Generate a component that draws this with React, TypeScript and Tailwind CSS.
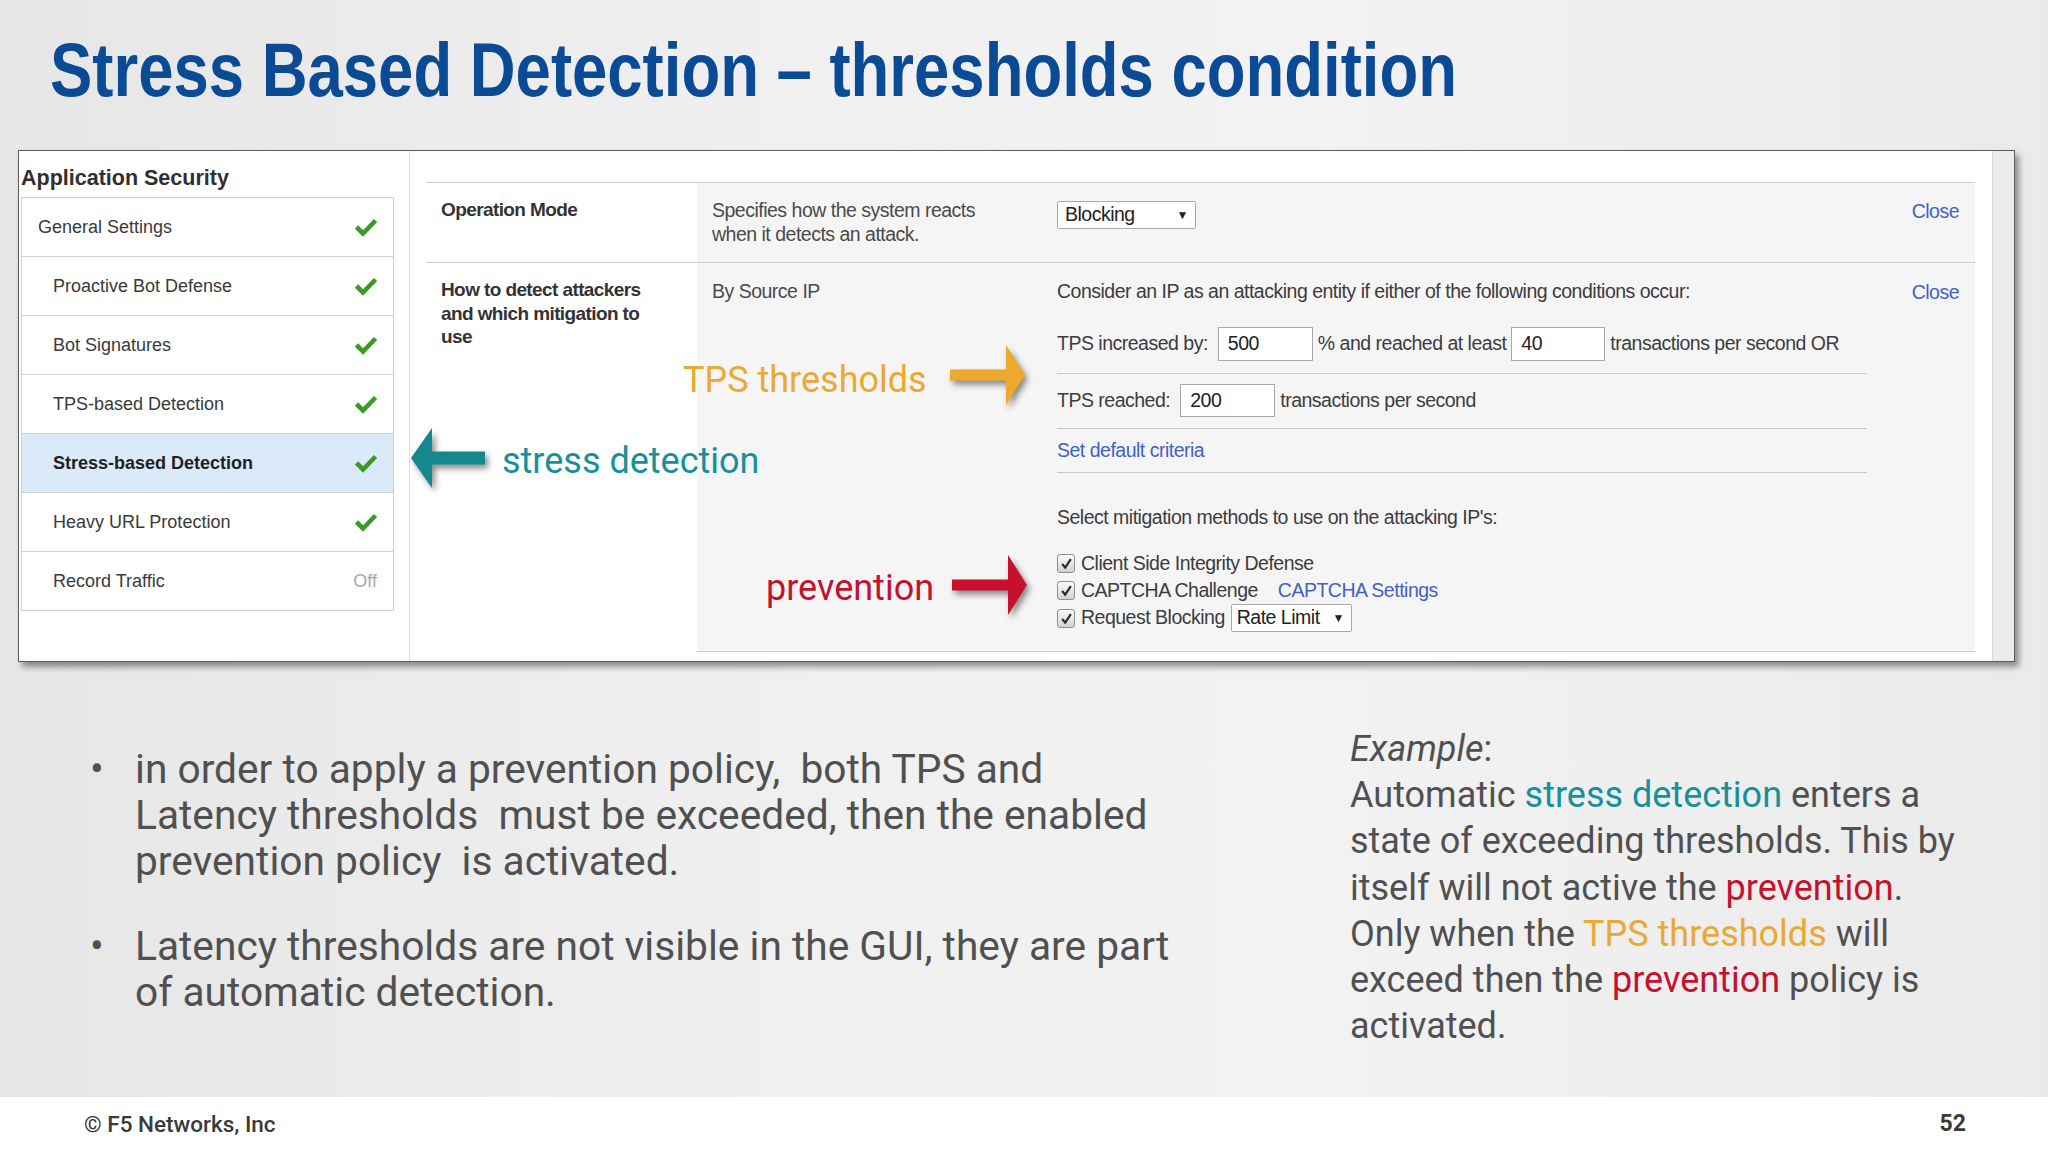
import React from "react";

const Check = () => (
  <svg width="24" height="20" viewBox="0 0 24 20" className="shrink-0">
    <path d="M2.5 10 L9 16.5 L21.5 3.5" fill="none" stroke="#3b9a23" strokeWidth="4.6" strokeLinejoin="miter" />
  </svg>
);

const Box = () => (
  <span className="w-[18px] h-[19px] rounded-[3px] border border-[#8e8e8e] bg-[linear-gradient(#fbfbfb,#d2d2d2)] flex items-center justify-center shrink-0">
    <svg width="13" height="13" viewBox="0 0 12 12">
      <path d="M2 6.5 L4.8 9.8 L10 2" fill="none" stroke="#2b2b2b" strokeWidth="2" />
    </svg>
  </span>
);

const ArrowRight = ({ color }: { color: string }) => (
  <svg width="76" height="62" viewBox="0 0 76 62" className="drop-shadow-[3px_4px_3px_rgba(0,0,0,0.45)]">
    <rect x="0" y="25.5" width="57" height="11" fill={color} />
    <polygon points="56,1 75,31 56,61" fill={color} />
  </svg>
);

const ArrowLeft = ({ color }: { color: string }) => (
  <svg width="76" height="62" viewBox="0 0 76 62" className="drop-shadow-[3px_4px_3px_rgba(0,0,0,0.45)]">
    <rect x="21" y="24.5" width="54" height="13" fill={color} />
    <polygon points="22,1 1,31 22,61" fill={color} />
  </svg>
);

const Input = ({ v, w, h }: { v: string; w: string; h: string }) => (
  <div className={`${w} ${h} bg-white border border-[#a8a8a8] flex items-center pl-[9px] text-[#222] shrink-0`}>{v}</div>
);

const sideItems = [
  { t: "General Settings", indent: false },
  { t: "Proactive Bot Defense", indent: true },
  { t: "Bot Signatures", indent: true },
  { t: "TPS-based Detection", indent: true },
  { t: "Stress-based Detection", indent: true, active: true },
  { t: "Heavy URL Protection", indent: true },
  { t: "Record Traffic", indent: true, off: true },
];

export default function App() {
  return (
    <div className="w-[2048px] h-[1152px] flex flex-col overflow-hidden bg-[linear-gradient(90deg,#e6e6e7_0%,#f0f0f1_40%,#f2f2f3_65%,#eaeaeb_100%)]">
      {/* Title */}
      <div className="h-[150px] pt-[32px] pl-[50px] shrink-0">
        <h1 className="inline-block origin-left scale-x-[0.835] font-['Liberation_Sans',Arial,sans-serif] font-bold text-[76px] leading-none text-[#0b4a94] whitespace-nowrap">
          Stress Based Detection – thresholds condition
        </h1>
      </div>

      {/* Screenshot panel */}
      <div className="relative ml-[18px] w-[1997px] h-[512px] shrink-0 border border-[#5c5c5c] bg-white shadow-[4px_5px_6px_rgba(0,0,0,0.4)] flex">
        {/* Sidebar */}
        <div className="w-[391px] h-full border-r border-[#dedede] flex flex-col font-['Liberation_Sans',Arial,sans-serif] shrink-0">
          <div className="pl-[2px] pt-[15px] h-[46px] text-[21.5px] leading-[25px] font-bold text-[#2f2f2f] whitespace-nowrap">
            Application Security
          </div>
          <div className="ml-[2px] w-[373px] border border-[#cfcfcf] flex flex-col">
            {sideItems.map((it, i) => (
              <div
                key={it.t}
                className={`${i > 0 ? "h-[59px] border-t border-[#d3d3d3]" : "h-[58px]"} flex items-center justify-between pr-[15px] ${it.indent ? "pl-[31px]" : "pl-[16px]"} ${it.active ? "bg-[#dbeaf8] font-bold text-[#1f1f1f]" : "text-[#3a3a3a]"} text-[18px]`}
              >
                <span className="whitespace-nowrap">{it.t}</span>
                {it.off ? <span className="text-[#a8a8a8] pr-[1px]">Off</span> : <Check />}
              </div>
            ))}
          </div>
        </div>

        {/* Main area */}
        <div className="w-[1582px] h-full pl-[16px] pr-[17px] pt-[31px] font-['Liberation_Sans',Arial,sans-serif] text-[19.5px] tracking-[-0.5px] text-[#3c3c3c] shrink-0">
          <div className="border-t border-[#cdcdcd]">
            {/* Row 1 */}
            <div className="h-[80px] flex border-b border-[#cdcdcd]">
              <div className="w-[271px] pl-[15px] pt-[15px] font-bold text-[19px] tracking-[-0.6px] leading-[24px] text-[#333]">Operation Mode</div>
              <div className="flex-1 bg-[#f6f5f5] flex">
                <div className="w-[360px] pl-[15px] pt-[15px] leading-[24px] text-[#4a4a4a]">
                  Specifies how the system reacts
                  <br />
                  when it detects an attack.
                </div>
                <div className="flex-1 pt-[18px]">
                  <div className="w-[139px] h-[28px] border border-[#a9a9a9] rounded-[2px] bg-white flex items-center justify-between pl-[7px] pr-[7px] text-[#222]">
                    <span>Blocking</span>
                    <span className="text-[12px]">▼</span>
                  </div>
                </div>
                <div className="pr-[16px] pt-[16px] leading-[24px] text-[#3f62c4]">Close</div>
              </div>
            </div>
            {/* Row 2 */}
            <div className="h-[389px] flex">
              <div className="w-[271px] pl-[15px] pt-[15px] font-bold text-[19px] tracking-[-0.6px] leading-[23.5px] text-[#333]">
                How to detect attackers
                <br />
                and which mitigation to
                <br />
                use
              </div>
              <div className="flex-1 bg-[#f6f5f5] border-b border-[#cdcdcd] flex">
                <div className="w-[360px] pl-[15px] pt-[16px] leading-[24px] text-[#4a4a4a]">By Source IP</div>
                <div className="flex-1 pt-[16px] flex flex-col">
                  <div className="h-[24px] leading-[24px] whitespace-nowrap">
                    Consider an IP as an attacking entity if either of the following conditions occur:
                  </div>
                  <div className="mt-[24px] h-[34px] flex items-center whitespace-nowrap">
                    <span className="mr-[10px]">TPS increased by:</span>
                    <Input v="500" w="w-[95px]" h="h-[34px]" />
                    <span className="mx-[5px]">% and reached at least</span>
                    <Input v="40" w="w-[94px]" h="h-[34px]" />
                    <span className="ml-[5px]">transactions per second OR</span>
                  </div>
                  <div className="mt-[12px] w-[810px] border-t border-[#c9c9c9]" />
                  <div className="mt-[10px] h-[33px] flex items-center whitespace-nowrap">
                    <span className="mr-[10px]">TPS reached:</span>
                    <Input v="200" w="w-[95px]" h="h-[33px]" />
                    <span className="ml-[5px]">transactions per second</span>
                  </div>
                  <div className="mt-[11px] w-[810px] border-t border-[#c9c9c9]" />
                  <div className="mt-[9px] h-[24px] leading-[24px] text-[#3f62c4]">Set default criteria</div>
                  <div className="mt-[10px] w-[810px] border-t border-[#c9c9c9]" />
                  <div className="mt-[32px] h-[24px] leading-[24px] whitespace-nowrap">
                    Select mitigation methods to use on the attacking IP's:
                  </div>
                  <div className="mt-[21px] h-[27px] flex items-center gap-[6px] whitespace-nowrap">
                    <Box />
                    <span>Client Side Integrity Defense</span>
                  </div>
                  <div className="h-[27px] flex items-center gap-[6px] whitespace-nowrap">
                    <Box />
                    <span>CAPTCHA Challenge</span>
                    <span className="ml-[14px] text-[#3f62c4]">CAPTCHA Settings</span>
                  </div>
                  <div className="h-[28px] flex items-center gap-[6px] whitespace-nowrap">
                    <Box />
                    <span>Request Blocking</span>
                    <div className="w-[121px] h-[28px] border border-[#a9a9a9] rounded-[2px] bg-white flex items-center justify-between pl-[5px] pr-[7px] text-[#222]">
                      <span>Rate Limit</span>
                      <span className="text-[12px]">▼</span>
                    </div>
                  </div>
                </div>
                <div className="pr-[16px] pt-[17px] leading-[24px] text-[#3f62c4]">Close</div>
              </div>
            </div>
          </div>
        </div>

        {/* Scrollbar */}
        <div className="w-[22px] h-full bg-[#ececec] border-l border-[#d8d8d8] shrink-0" />

        {/* Annotations (overlay) */}
        <div className="absolute left-[664px] top-[211px] font-['Roboto',sans-serif] text-[36px] leading-[36px] text-[#eaa934] whitespace-nowrap">
          TPS thresholds
        </div>
        <div className="absolute left-[931px] top-[193px]">
          <ArrowRight color="#eca92e" />
        </div>
        <div className="absolute left-[391px] top-[276px]">
          <ArrowLeft color="#14878f" />
        </div>
        <div className="absolute left-[483px] top-[292px] font-['Roboto',sans-serif] text-[36px] leading-[36px] text-[#16909a] whitespace-nowrap">
          stress detection
        </div>
        <div className="absolute left-[747px] top-[419px] font-['Roboto',sans-serif] text-[36px] leading-[36px] text-[#c5112f] whitespace-nowrap">
          prevention
        </div>
        <div className="absolute left-[933px] top-[403px]">
          <ArrowRight color="#c8102e" />
        </div>
      </div>

      {/* Body text */}
      <div className="h-[435px] flex font-['Roboto',sans-serif] text-[#505051] shrink-0">
        <div className="w-[1350px] pl-[90px] pt-[84px] text-[40.7px] leading-[46px]">
          <div className="flex">
            <span className="w-[45px] shrink-0">•</span>
            <div className="whitespace-pre">
              {"in order to apply a prevention policy,  both TPS and\nLatency thresholds  must be exceeded, then the enabled\nprevention policy  is activated."}
            </div>
          </div>
          <div className="flex mt-[39px]">
            <span className="w-[45px] shrink-0">•</span>
            <div className="whitespace-pre">
              {"Latency thresholds are not visible in the GUI, they are part\nof automatic detection."}
            </div>
          </div>
        </div>
        <div className="flex-1 pt-[64px] text-[36px] leading-[46.2px] whitespace-nowrap">
          <div>
            <i>Example</i>:
          </div>
          <div>
            Automatic <span className="text-[#16909a]">stress detection</span> enters a
          </div>
          <div>state of exceeding thresholds. This by</div>
          <div>
            itself will not active the <span className="text-[#c5112f]">prevention</span>.
          </div>
          <div>
            Only when the <span className="text-[#eaa934]">TPS thresholds</span> will
          </div>
          <div>
            exceed then the <span className="text-[#c5112f]">prevention</span> policy is
          </div>
          <div>activated.</div>
        </div>
      </div>

      {/* Footer */}
      <div className="h-[55px] bg-white flex items-center justify-between pl-[84px] pr-[82px] font-['Roboto',sans-serif] shrink-0">
        <span className="text-[22.5px] font-medium text-[#3a3a3a]">© F5 Networks, Inc</span>
        <span className="text-[23px] font-bold text-[#3a3a3a]">52</span>
      </div>
    </div>
  );
}
